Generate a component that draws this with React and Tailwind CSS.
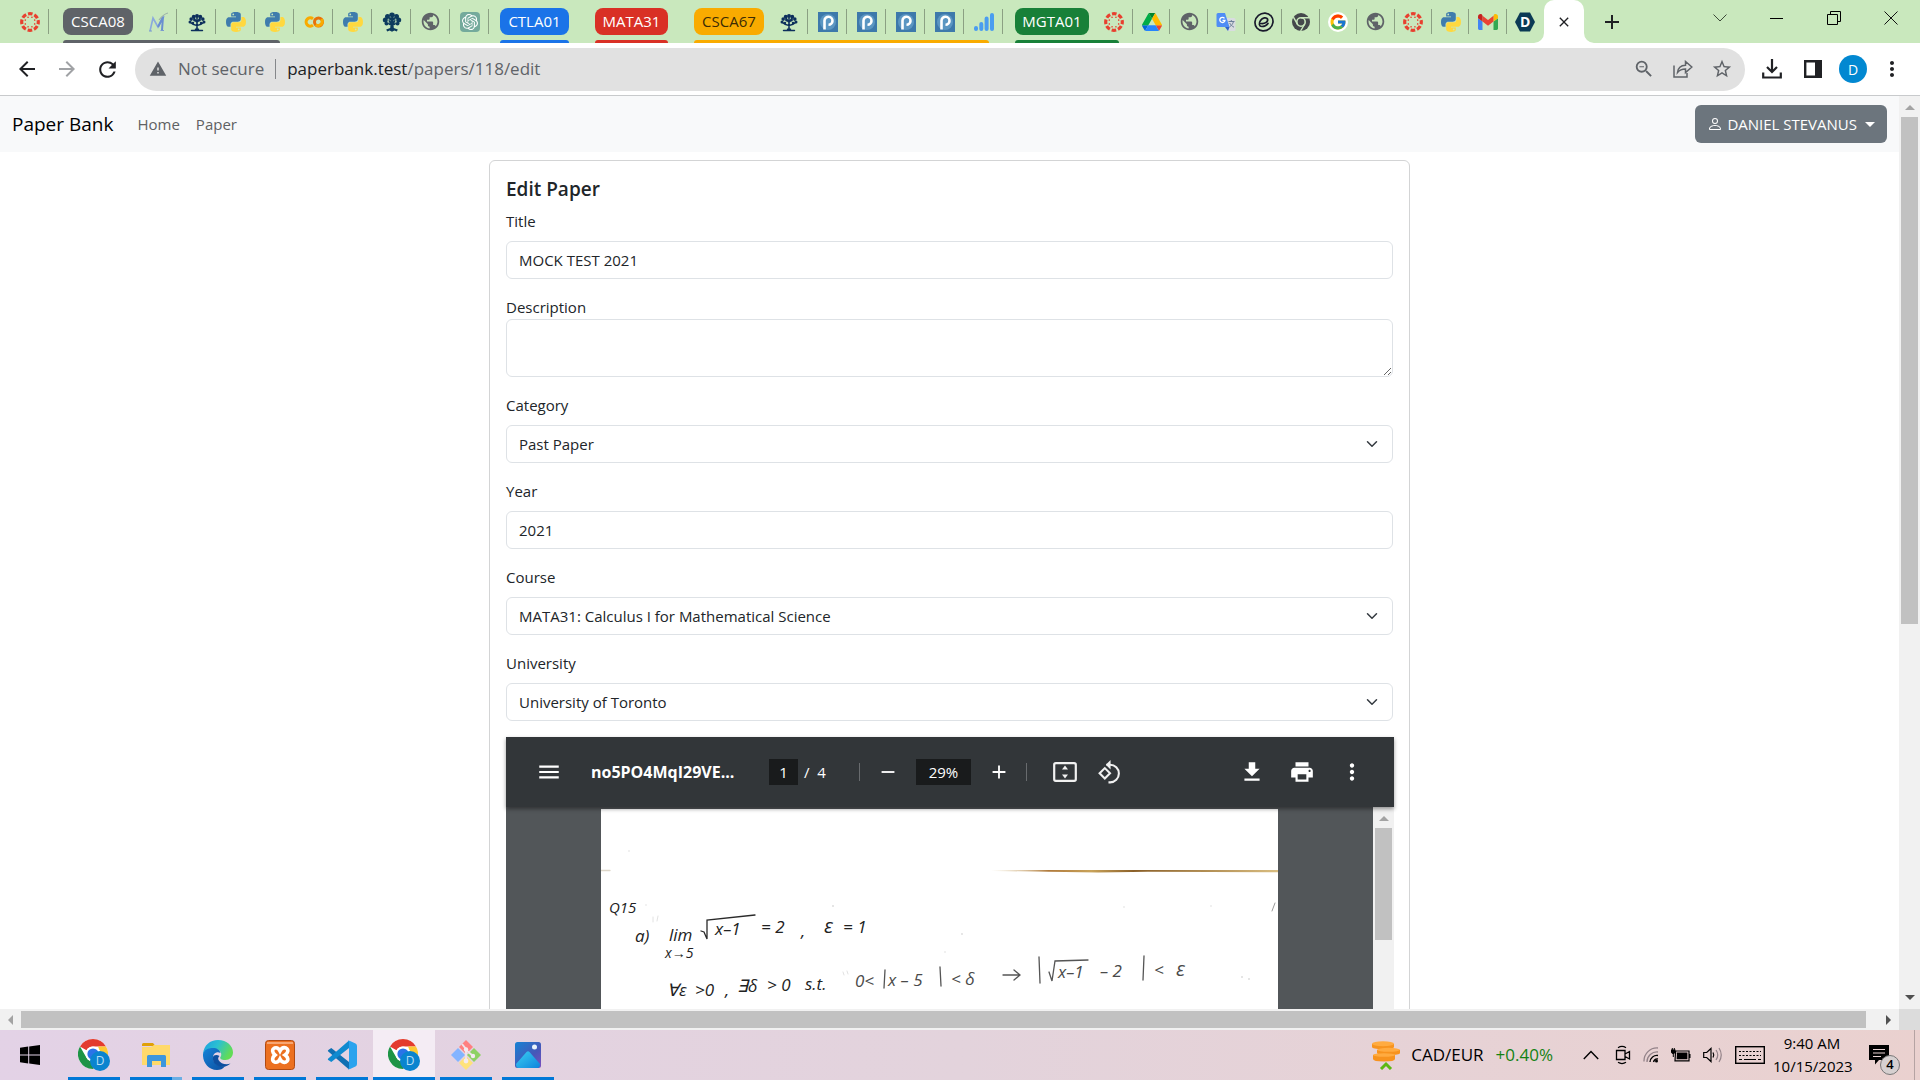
import React from "react";
import {
  MdArrowBack, MdArrowForward, MdRefresh, MdWarning, MdZoomOut, MdStarOutline,
  MdMoreVert, MdMenu, MdRemove, MdAdd, MdPrint, MdDownload, MdPublic, MdClose,
} from "react-icons/md";
import { BsPerson } from "react-icons/bs";
import { FcGoogle } from "react-icons/fc";
import { SiOpenai } from "react-icons/si";

/* ---------- tab icons ---------- */

const Canvas = () => (
  <svg viewBox="0 0 20 20" className="size-5">
    <circle cx="10" cy="10" r="8.3" fill="none" stroke="#e8402f" strokeWidth="3.2" strokeDasharray="4.6 1.92" strokeDashoffset="2.3" />
    {[0, 45, 90, 135, 180, 225, 270, 315].map((a) => (
      <circle key={a} cx="10" cy="4.9" r="0.8" fill="#e8402f" transform={`rotate(${a + 22.5} 10 10)`} />
    ))}
  </svg>
);

const Python = () => (
  <svg viewBox="0 0 256 255" className="size-5">
    <path fill="#3f7cad" d="M126.916.072c-64.832 0-60.784 28.115-60.784 28.115l.072 29.128h61.868v8.745H41.631S.145 61.355.145 126.77c0 65.417 36.21 63.097 36.21 63.097h21.61v-30.356s-1.165-36.21 35.632-36.21h61.362s34.475.557 34.475-33.319V33.97S194.67.072 126.916.072zM92.802 19.66a11.12 11.12 0 0 1 11.13 11.13 11.12 11.12 0 0 1-11.13 11.13 11.12 11.12 0 0 1-11.13-11.13 11.12 11.12 0 0 1 11.13-11.13z" />
    <path fill="#ffd83f" d="M128.757 254.126c64.832 0 60.784-28.115 60.784-28.115l-.072-29.127H127.6v-8.745h86.441s41.486 4.705 41.486-60.712c0-65.416-36.21-63.096-36.21-63.096h-21.61v30.355s1.165 36.21-35.632 36.21h-61.362s-34.475-.557-34.475 33.32v56.013s-5.235 33.897 62.518 33.897zm34.114-19.586a11.12 11.12 0 0 1-11.13-11.13 11.12 11.12 0 0 1 11.13-11.131 11.12 11.12 0 0 1 11.13 11.13 11.12 11.12 0 0 1-11.13 11.13z" />
  </svg>
);

const Tree = () => (
  <svg viewBox="0 0 20 20" className="size-5" fill="none" stroke="#0d2f5c" strokeLinecap="round">
    <path strokeWidth="1.6" d="M10 17V6M10 13.500C7 13 5 12 3.500 10.500M10 13.500c3-.5 5-1.500 6.500-3M10 10C8 9 7 7 6.500 5M10 10c2-1 3-3 3.500-5" />
    <path strokeWidth="1.400" d="M4.500 18.500h11M8.500 17.300h3" />
    <g fill="#0d2f5c" stroke="none">
      <circle cx="10" cy="4" r="2" /><circle cx="6.700" cy="4.700" r="1.900" /><circle cx="13.300" cy="4.700" r="1.900" />
      <circle cx="4.200" cy="7.100" r="1.800" /><circle cx="15.800" cy="7.100" r="1.800" />
      <circle cx="3" cy="9.900" r="1.500" /><circle cx="17" cy="9.900" r="1.500" />
      <circle cx="7.500" cy="8" r="1.400" /><circle cx="12.500" cy="8" r="1.400" /><circle cx="6" cy="11" r="1.200" /><circle cx="14" cy="11" r="1.200" />
    </g>
  </svg>
);

const FullTree = () => (
  <svg viewBox="0 0 20 20" className="size-5" fill="#0d3b5e">
    <circle cx="10" cy="3.300" r="2.800" /><circle cx="5.500" cy="4.500" r="2.500" /><circle cx="14.500" cy="4.500" r="2.500" />
    <circle cx="3.300" cy="8" r="2.500" /><circle cx="16.700" cy="8" r="2.500" /><circle cx="10" cy="8" r="3.500" />
    <circle cx="4.500" cy="11.500" r="2" /><circle cx="15.500" cy="11.500" r="2" />
    <circle cx="8" cy="11.500" r="1.800" /><circle cx="12" cy="11.500" r="1.800" />
    <path d="M8.700 10h2.600l.5 6 4 1.500-1 2-2.500-1-2.300 1.300-2.300-1.300-2.500 1-1-2 4-1.500z" />
    <path stroke="#9fc3ae" strokeWidth=".5" fill="none" d="M6 7l3 2M14 7l-3 2M8 4l1 2M12.500 4l-1 2M5 10l3 1M15 10l-3 1" />
  </svg>
);

const MLogo = () => (
  <svg viewBox="0 0 20 20" className="size-5" fill="none">
    <path d="M2 19L5 6l5 9 6-11" stroke="#8aa9dd" strokeWidth="1.600" />
    <path d="M10 15L15 5l-1 13" stroke="#6a8fd0" strokeWidth="2" />
    <path d="M11 8c3-4 5-6 9-7" stroke="#9bb1a8" strokeWidth="1.200" />
    <path d="M1 19h3M12.500 18.500H16" stroke="#7b9ad0" strokeWidth="1.200" />
  </svg>
);

const Colab = () => (
  <svg viewBox="0 0 20 20" className="size-5" fill="none" strokeWidth="3">
    <path stroke="#f9ab00" d="M9 6.800A4.200 4.200 0 1 0 9 13.200" />
    <circle cx="14.500" cy="10" r="4" stroke="#e8710a" />
    <path stroke="#f9ab00" d="M11.700 12.800a4 4 0 0 0 5.600-5.600" />
  </svg>
);

const Globe = () => <MdPublic className="size-[21px] text-[#5f6368]" />;

const Gpt = () => (
  <span className="flex size-5 items-center justify-center rounded-sm bg-[#74aa9c] text-white">
    <SiOpenai className="size-4" />
  </span>
);

const PLogo = () => (
  <svg viewBox="0 0 20 20" className="size-5">
    <rect width="20" height="20" fill="#3d79ab" />
    <circle cx="10" cy="10" r="8" fill="#5b96c2" />
    <path d="M6.500 17.500V8.500a4 4 0 1 1 4 4.300" fill="none" stroke="#fff" strokeWidth="2.600" />
  </svg>
);

const Bars = () => (
  <svg viewBox="0 0 20 20" className="size-5" stroke="#4a9df0" strokeWidth="4" strokeLinecap="round">
    <path d="M2 17v-1M7.300 17v-5M12.600 17V6.500M18 17V3" />
  </svg>
);

const Drive = () => (
  <svg viewBox="0 0 87.300 78" className="size-5">
    <path fill="#0066da" d="M6.600 66.850l3.850 6.650c.8 1.400 1.950 2.500 3.300 3.300L27.500 53H0c0 1.550.4 3.100 1.200 4.500z" />
    <path fill="#00ac47" d="M43.650 25L29.900 1.200c-1.350.8-2.500 1.900-3.300 3.300L1.200 48.500A9 9 0 0 0 0 53h27.500z" />
    <path fill="#ea4335" d="M73.550 76.800c1.350-.8 2.500-1.900 3.300-3.300l1.600-2.750L86.100 57.500c.8-1.400 1.200-2.950 1.200-4.500H59.800l5.850 11.500z" />
    <path fill="#00832d" d="M43.650 25L57.400 1.200C56.050.4 54.500 0 52.900 0H34.400c-1.600 0-3.150.45-4.500 1.200z" />
    <path fill="#2684fc" d="M59.800 53H27.500L13.750 76.800c1.350.8 2.900 1.200 4.500 1.200h50.800c1.600 0 3.150-.45 4.500-1.200z" />
    <path fill="#ffba00" d="M73.400 26.500L60.700 4.500c-.8-1.400-1.950-2.500-3.300-3.300L43.650 25 59.800 53h27.450c0-1.550-.4-3.100-1.200-4.500z" />
  </svg>
);

const Translate = () => (
  <svg viewBox="0 0 20 20" className="size-5">
    <path fill="#d9dce0" d="M8 6h10a1.500 1.500 0 0 1 1.500 1.500v10A1.500 1.500 0 0 1 18 19h-6z" />
    <path fill="#4f8df5" d="M2 1h7l4.500 14H2A1.500 1.500 0 0 1 .5 13.500v-11A1.500 1.500 0 0 1 2 1z" />
    <path fill="#2f62c9" d="M9 15h4.500L12 19z" />
    <path d="M8.500 6.300A2.600 2.600 0 1 0 9 8.300H6.500" fill="none" stroke="#fff" strokeWidth="1.300" />
    <path d="M12.500 9.500h6M15.300 8v1.500M17.500 9.500c-.7 2.500-2 4-4 5.500M13.700 11c1 2 2.300 3.200 4.300 4.200" fill="none" stroke="#6b7f99" />
  </svg>
);

const Swirl = () => (
  <svg viewBox="0 0 20 20" className="size-5" fill="none" stroke="#191a2c" strokeWidth="1.700" strokeLinecap="round">
    <ellipse cx="10" cy="10" rx="9.300" ry="8.600" transform="rotate(-40 10 10)" />
    <path d="M7 11.500c4 .5 7.500-2 6.500-4.500-1-2-5-1.500-7 1.500s-1.500 6 1.500 6c2.500 0 4.500-1 6-3" />
  </svg>
);

const DarkChrome = () => (
  <svg viewBox="0 0 20 20" className="size-5" fill="none">
    <circle cx="10" cy="10" r="9" fill="#45484c" />
    <circle cx="10" cy="10" r="4.200" stroke="#c9e7bd" strokeWidth="1.600" />
    <path d="M10 5.800h8M6.400 12.100L2.400 5.200M13.600 12.100l-4 6.900" stroke="#c9e7bd" strokeWidth="1.400" />
  </svg>
);

const GoogleDot = () => (
  <span className="flex size-5 items-center justify-center rounded-full bg-white"><FcGoogle className="size-[18px]" /></span>
);

const Gmail = () => (
  <svg viewBox="0 0 20 16" className="h-4 w-5">
    <path fill="#4285f4" d="M1.400 16H4.500V7.500L0 4.200v10.400C0 15.400.6 16 1.400 16z" />
    <path fill="#34a853" d="M15.500 16h3.100c.8 0 1.400-.6 1.400-1.400V4.200l-4.500 3.300z" />
    <path fill="#fbbc04" d="M15.500 1.800v5.700L20 4.200V2.500c0-2-2.300-3.100-3.900-2z" />
    <path fill="#ea4335" d="M4.500 7.500V1.800L10 6l5.500-4.200v5.700L10 11.700z" />
    <path fill="#c5221f" d="M0 2.500v1.700l4.500 3.300V1.800L3.900.5C2.300-.6 0 .5 0 2.500z" />
  </svg>
);

const Hexagon = () => (
  <span className="relative flex h-5 w-5 items-center justify-center">
    <svg viewBox="0 0 20 20" className="absolute inset-0 size-5"><path fill="#0b3a55" d="M5 0.500h10l5 9.500-5 9.500H5L0 10z" /></svg>
    <span className="relative text-sm leading-5 font-bold text-white">D</span>
  </span>
);

/* ---------- taskbar icons ---------- */

const Chrome = () => (
  <span className="relative block size-8">
    <svg viewBox="0 0 48 48" className="size-[30px]">
      <circle cx="24" cy="24" r="24" fill="#fff" />
      <path fill="#e33b2e" d="M24 0a24 24 0 0 1 20.800 12H24a12 12 0 0 0-10.400 6L3.200 12A24 24 0 0 1 24 0z" />
      <path fill="#fcc934" d="M44.800 12A24 24 0 0 1 24 48l10.400-18a12 12 0 0 0 0-12L32 12z" />
      <path fill="#1e9446" d="M3.200 12A24 24 0 0 0 24 48l10.400-18A12 12 0 0 1 13.600 30z" />
      <circle cx="24" cy="24" r="12" fill="#fff" />
      <circle cx="24" cy="24" r="9" fill="#2a73e8" />
    </svg>
    <span className="absolute right-0 bottom-0 flex size-5 items-center justify-center rounded-full bg-[#0a84cf] text-xs text-[#b8def5]">D</span>
  </span>
);

const Folder = () => (
  <svg viewBox="0 0 28 24" className="h-6 w-7">
    <path fill="#e0a008" d="M0 1.500A1.500 1.500 0 0 1 1.500 0H11l2.500 3H0z" />
    <path fill="#ffd96b" d="M0 4h9l3-2h16v20H0z" />
    <path fill="#3c96dd" d="M5 13.500A1.500 1.500 0 0 1 6.500 12h16a1.500 1.500 0 0 1 1.500 1.500V24h-5v-6h-9v6H5z" />
  </svg>
);

const Edge = () => (
  <svg viewBox="0 0 30 30" className="size-[30px]">
    <defs>
      <linearGradient id="edgeTop" x1="0" y1="0" x2="1" y2=".4"><stop offset="0" stopColor="#1b9de2" /><stop offset=".5" stopColor="#2bc0d2" /><stop offset="1" stopColor="#62dc57" /></linearGradient>
      <linearGradient id="edgeLow" x1="0" y1="0" x2="1" y2="1"><stop offset="0" stopColor="#1583d8" /><stop offset="1" stopColor="#0c4fa0" /></linearGradient>
    </defs>
    <path fill="url(#edgeTop)" d="M0 14C1 5 7 0 15 0c9 0 15 6 15 12.500 0 4.500-3.500 7.500-7.500 7.500-4.500 0-6-1.500-5-3 2-3 0-8-6-8C6 9 1 11 0 14z" />
    <path fill="url(#edgeLow)" d="M0 14c1-4 5-6 10-6 4 0 7 2 7.500 5-4-2-8 1-7.500 5.500C10.500 24 16 27 22 26c-2 3-5 4-8 4C5 30-.5 22 0 14z" />
    <path fill="#0d4f9f" d="M10 17c-1 6 4 10 10 9.800 3-.1 5.500-1.300 7.500-3.300-4 1.500-10 .5-12-3.500-.8-1.600 0-3 1-4-3-2-6-1-6.500 1z" />
  </svg>
);

const Xampp = () => (
  <svg viewBox="0 0 30 30" className="size-[30px]">
    <rect x=".5" y=".5" width="29" height="29" rx="3" fill="#ec7020" stroke="#b04a12" />
    <path fill="#f7a673" d="M2 2h26v2H2z" />
    <path d="M9.500 8c3-1 4.500 1 5.500 3 1-2 3-4 6-3 3 1.500 2 5-1 7 3 2 4 5.500 1 7-3 1-5-1-6-3-1 2-2.500 4-5.500 3-3-1.500-2-5 .5-7-2.500-2-3.500-5.500-.5-7z" fill="none" stroke="#fff" strokeWidth="3.600" />
  </svg>
);

const VsCode = () => (
  <svg viewBox="0 0 30 30" className="size-[30px]">
    <path fill="#1070b3" d="M2 9.500L4.300 8 22 22v7.500L1 11.300q-.8-.9 1-1.800z" />
    <path fill="#0f8ad0" d="M2 20.500L4.300 22 22 8V.5L1 18.700q-.8.9 1 1.800z" />
    <path fill="#2aa3ee" d="M21 .5q1 0 2 .4l5.500 2.700Q30 4.400 30 6v18q0 1.600-1.500 2.400L23 29.100q-1 .4-2 .4 1-1 1-2V2.500q0-1-1-2z" />
  </svg>
);

const Git = () => (
  <svg viewBox="0 0 30 30" className="size-[30px]">
    <path fill="#ff8080" d="M15 0l7 7-7 7-7-7z" /><path fill="#83b4ff" d="M7 8l7 7-7 7-7-7z" />
    <path fill="#8ed163" d="M23 8l7 7-7 7-7-7z" /><path fill="#ffe27a" d="M15 16l7 7-7 7-7-7z" />
    <path d="M11 4l4 5v14M15 10l7 6" stroke="#efe3e8" strokeWidth="2" fill="none" />
    <g fill="#f4eaf0"><circle cx="15" cy="9.500" r="2.200" /><circle cx="22" cy="16" r="2.200" /><circle cx="15" cy="21" r="2.400" /></g>
  </svg>
);

const Photos = () => (
  <svg viewBox="0 0 26 26" className="size-[26px]">
    <defs>
      <linearGradient id="sky" x1="0" y1="0" x2="1" y2="1"><stop offset="0" stopColor="#1583d4" /><stop offset=".6" stopColor="#4658b8" /><stop offset="1" stopColor="#7c4fc0" /></linearGradient>
      <linearGradient id="hill" x1="0" y1="0" x2="1" y2="1"><stop offset="0" stopColor="#3ad0f2" /><stop offset="1" stopColor="#0f84dc" /></linearGradient>
    </defs>
    <rect width="26" height="26" rx="2.500" fill="url(#sky)" />
    <path fill="url(#hill)" d="M1 22l10.500-12q1.500-1.700 3 0L25 22q0 4-2.500 4h-19Q1 26 1 22z" />
    <circle cx="19.500" cy="5" r="2.500" fill="#e9f3fb" />
  </svg>
);

const Coins = () => (
  <svg viewBox="0 0 28 29" className="h-[29px] w-7">
    <g fill="#f7931e">
      <path d="M0 3v3q0 2 11 2t11-2V3z" /><path d="M5 9v3q0 2 11.500 2T28 12V9z" /><path d="M1 14v4q0 2.500 11 2.500T23 18v-4z" />
    </g>
    <g fill="#ffab40"><ellipse cx="11" cy="2.800" rx="11" ry="2.500" /><ellipse cx="16.500" cy="8.800" rx="11.500" ry="2" /><ellipse cx="12" cy="14" rx="11" ry="1.800" /></g>
    <path d="M9 28l5-5 5 5" fill="none" stroke="#5cb812" strokeWidth="3" />
  </svg>
);

/* ---------- browser chrome ---------- */

function Tab({ label, children, grow }) {
  return (
    <button
      aria-label={label}
      className={`relative flex h-[43px] items-center justify-center after:absolute after:top-[9px] after:right-0 after:h-[25px] after:w-px after:bg-[#8ba083] ${grow ? "min-w-0 flex-1" : "w-[39px]"}`}
    >
      {children}
    </button>
  );
}

function Group({ name, chip, bar, children, className = "" }) {
  return (
    <div className={`relative flex items-center ${className}`}>
      <button className={`h-[27px] rounded-lg text-center text-[15px] leading-[27px] ${chip}`}>{name}</button>
      {children && <div className="ml-[5px] flex">{children}</div>}
      <div className={`absolute bottom-0 left-0 h-[3px] rounded-t-sm ${bar} ${children ? "right-[14px]" : "right-0"}`} />
    </div>
  );
}

function TabStrip() {
  return (
    <header className="flex h-[43px] shrink-0 bg-[#c9e8bd]">
      <div className="ml-2.5"><Tab label="Canvas"><Canvas /></Tab></div>
      <Group name="CSCA08" chip="bg-[#5f6368] text-white w-[70px]" bar="bg-[#5f6368]" className="ml-3.5">
        <Tab label="Mathematics"><MLogo /></Tab>
        <Tab label="University"><Tree /></Tab>
        <Tab label="Python"><Python /></Tab>
        <Tab label="Python"><Python /></Tab>
      </Group>
      <Tab label="Colab"><Colab /></Tab>
      <Tab label="Python"><Python /></Tab>
      <Tab label="University"><FullTree /></Tab>
      <Tab label="Site"><Globe /></Tab>
      <Tab label="Chat"><Gpt /></Tab>
      <Group name="CTLA01" chip="bg-[#1a73e8] text-white w-[69px]" bar="bg-[#1a73e8]" className="ml-[11px]" />
      <Group name="MATA31" chip="bg-[#d93025] text-white w-[73px]" bar="bg-[#d93025]" className="ml-[26px]" />
      <Group name="CSCA67" chip="bg-[#f9ab00] text-[#3c2c05] w-[70px]" bar="bg-[#f9ab00]" className="ml-[26px]">
        <Tab label="University"><Tree /></Tab>
        <Tab label="Paper"><PLogo /></Tab>
        <Tab label="Paper"><PLogo /></Tab>
        <Tab label="Paper"><PLogo /></Tab>
        <Tab label="Paper"><PLogo /></Tab>
        <Tab label="Chart"><Bars /></Tab>
      </Group>
      <Group name="MGTA01" chip="bg-[#188038] text-white w-[74px]" bar="bg-[#188038]" className="ml-3">
        <Tab label="Canvas"><Canvas /></Tab>
      </Group>
      <div className="flex w-[411px]">
        <Tab grow label="Drive"><Drive /></Tab>
        <Tab grow label="Site"><Globe /></Tab>
        <Tab grow label="Translate"><Translate /></Tab>
        <Tab grow label="Site"><Swirl /></Tab>
        <Tab grow label="Chrome"><DarkChrome /></Tab>
        <Tab grow label="Google"><GoogleDot /></Tab>
        <Tab grow label="Site"><Globe /></Tab>
        <Tab grow label="Canvas"><Canvas /></Tab>
        <Tab grow label="Python"><Python /></Tab>
        <Tab grow label="Gmail"><Gmail /></Tab>
        <button aria-label="D" className="flex h-[43px] min-w-0 flex-1 items-center justify-center"><Hexagon /></button>
      </div>
      <div className="relative flex w-10 items-center justify-center rounded-t-[10px] bg-white">
        <svg viewBox="0 0 10 10" className="absolute bottom-0 -left-2.5 size-2.5"><path fill="#fff" d="M10 0v10H0A10 10 0 0 0 10 0z" /></svg>
        <svg viewBox="0 0 10 10" className="absolute -right-2.5 bottom-0 size-2.5"><path fill="#fff" d="M0 0v10h10A10 10 0 0 1 0 0z" /></svg>
        <button aria-label="Close tab"><MdClose className="size-4 text-[#202124]" /></button>
      </div>
      <button aria-label="New tab" className="ml-4"><MdAdd className="size-6 text-[#202124]" /></button>
      <div className="ml-auto flex h-9 items-center">
        <button aria-label="Search tabs" className="flex w-[57px] justify-center">
          <svg viewBox="0 0 14 8" className="h-2 w-3.5" fill="none" stroke="#3c4a38"><path d="M.5.5L7 7 13.500.5" /></svg>
        </button>
        <button aria-label="Minimize" className="flex w-[57px] justify-center"><span className="h-px w-[13px] bg-black" /></button>
        <button aria-label="Restore" className="flex w-[57px] justify-center">
          <svg viewBox="0 0 14 14" className="size-3.5" fill="none" stroke="#000"><path d="M.5 3.500h10v10H.5zM3.500 3.500V.5h10v10h-3" /></svg>
        </button>
        <button aria-label="Close" className="flex w-[58px] justify-center">
          <svg viewBox="0 0 14 14" className="size-3.5" fill="none" stroke="#111"><path d="M.5.5l13 13M13.500.5l-13 13" /></svg>
        </button>
      </div>
    </header>
  );
}

function AddressBar() {
  return (
    <div className="flex h-[53px] shrink-0 items-center border-b border-[#c8cacc] bg-white pr-4 pl-[15px] text-[#202124]">
      <button aria-label="Back"><MdArrowBack className="size-6" /></button>
      <button aria-label="Forward" className="ml-4"><MdArrowForward className="size-6 text-[#a0a2a5]" /></button>
      <button aria-label="Reload" className="ml-4"><MdRefresh className="size-[25px]" /></button>
      <div className="ml-[15px] flex h-[43px] flex-1 items-center rounded-full bg-[#e1e1e1] pr-3 pl-3.5 text-[17px] text-[#5f6368]">
        <MdWarning className="size-[18px]" />
        <span className="ml-[11px]">Not secure</span>
        <span className="mx-[11px] h-5 w-px bg-[#85878a]" />
        <span><span className="text-[#202124]">paperbank.test</span>/papers/118/edit</span>
        <div className="ml-auto flex items-center gap-[18px]">
          <button aria-label="Zoom"><MdZoomOut className="size-[22px]" /></button>
          <button aria-label="Share">
            <svg viewBox="0 0 20 18" className="h-[18px] w-5" fill="none" stroke="currentColor" strokeWidth="1.500"><path d="M1 5.500V17h13v-4M4.500 12.500C5 8 8 5.500 12.500 5.300V1.500L18.800 7l-6.300 5.500V9C9 9 6.500 10 4.500 12.500z" /></svg>
          </button>
          <button aria-label="Bookmark"><MdStarOutline className="size-[22px]" /></button>
        </div>
      </div>
      <button aria-label="Downloads" className="ml-[17px]">
        <svg viewBox="0 0 20 20" className="size-5" fill="none" stroke="currentColor" strokeWidth="2.200"><path d="M10 0v12.500M5 8l5 5 5-5M1.200 13.500v5h17.600v-5" /></svg>
      </button>
      <button aria-label="Side panel" className="ml-[22px]">
        <svg viewBox="0 0 18 18" className="size-[18px]"><path fill="none" stroke="currentColor" strokeWidth="2.400" d="M1.200 1.200h15.600v15.600H1.200z" /><path fill="currentColor" d="M11 0h7v18h-7z" /></svg>
      </button>
      <button className="ml-[17px] size-7 rounded-full bg-[#0288d1] text-[14px] text-white">D</button>
      <button aria-label="Menu" className="ml-[13px]"><MdMoreVert className="size-6" /></button>
    </div>
  );
}

/* ---------- form ---------- */

const fieldClass = "block h-[38px] w-full appearance-none rounded-md border border-[#dee2e6] bg-white px-3 text-[15px] text-[#212529]";

function TextField({ id, label, value }) {
  return (
    <div className="mb-4">
      <label htmlFor={id} className="mb-2 block">{label}</label>
      <input id={id} defaultValue={value} className={fieldClass} />
    </div>
  );
}

function SelectField({ id, label, value }) {
  return (
    <div className="mb-4">
      <label htmlFor={id} className="mb-2 block">{label}</label>
      <div className="relative">
        <select id={id} className={fieldClass}><option>{value}</option></select>
        <svg viewBox="0 0 16 16" className="pointer-events-none absolute top-[13px] right-[15px] size-3" fill="none" stroke="#343a40" strokeWidth="2" strokeLinecap="round" strokeLinejoin="round"><path d="m2 5 6 6 6-6" /></svg>
      </div>
    </div>
  );
}

function Scan() {
  return (
    <svg viewBox="0 0 677 260" className="h-[260px] w-[677px] bg-white" fill="none" stroke="#2a2a2a" strokeWidth="1.300" strokeLinecap="round">
      <defs>
        <linearGradient id="crease"><stop offset="0" stopColor="#d9c28a" stopOpacity="0" /><stop offset=".2" stopColor="#b07a3c" /><stop offset=".35" stopColor="#c9a35a" /><stop offset=".5" stopColor="#8a5f28" /><stop offset="1" stopColor="#d9bd80" /></linearGradient>
      </defs>
      <path fill="url(#crease)" stroke="none" d="M390 61h287v2.200l-130-.4-50 .8-107-1.600z" />
      <path stroke="#ddd6c8" d="M0 61.500h9" />
      <path stroke="#9a9a9a" d="M674 94l-3 8" strokeWidth="1" />
      <g fill="#dcdcdc" stroke="none">
        <circle cx="28" cy="42" r=".8" /><circle cx="232" cy="97" r="1" /><circle cx="361" cy="125" r=".9" /><circle cx="344" cy="143" r=".8" />
        <circle cx="523" cy="98" r=".8" /><circle cx="610" cy="97" r=".8" /><circle cx="641" cy="168" r="1" /><circle cx="648" cy="170" r="1" /><circle cx="45" cy="96" r=".7" />
      </g>
      <path stroke="#e2e2e2" d="M52 108v5M57 107l-1 5M242 163l1 3M246 162l1 3" strokeWidth="1" />
      <g fill="#222" stroke="none" className="italic" fontSize="17">
        <text x="8" y="104" fontSize="15">Q15</text>
        <text x="34" y="133">a)</text>
        <text x="68" y="132">lim</text>
        <text x="64" y="149" fontSize="14">x→5</text>
        <text x="114" y="126">x–1</text>
        <text x="160" y="124">= 2</text>
        <text x="200" y="128">,</text>
        <text x="223" y="124" fontSize="20">ε</text>
        <text x="242" y="124">= 1</text>
        <text x="66" y="187">∀ε</text>
        <text x="94" y="187">&gt;0</text>
        <text x="124" y="187">,</text>
        <text x="136" y="183">∃δ</text>
        <text x="166" y="182">&gt; 0</text>
        <text x="204" y="181">s.t.</text>
      </g>
      <g fill="#4a4a4a" stroke="none" className="italic" fontSize="17">
        <text x="254" y="178">0&lt;</text>
        <text x="287" y="177">x – 5</text>
        <text x="350" y="176">&lt; δ</text>
        <text x="457" y="169">x–1</text>
        <text x="499" y="168">– 2</text>
        <text x="553" y="167">&lt;</text>
        <text x="575" y="167" fontSize="20">ε</text>
      </g>
      <path d="M100 122l3 1 3 7 0-19 48-5" />
      <path stroke="#555" d="M284 161l-1 18M339 158l1 19M402 166h17M413 161l6 5-6 5M438 148l1 26M448 163l3 9 3-20 33-1M543 147l-1 24" />
    </svg>
  );
}

function PdfViewer() {
  return (
    <section className="-mr-px bg-[#525659] text-white">
      <div className="relative flex h-[70px] items-center bg-[#323639] pr-[29px] pl-[30px] shadow-[0_2px_4px_rgba(0,0,0,0.4)]">
        <button aria-label="Sidebar"><MdMenu className="size-[26px]" /></button>
        <span className="ml-[29px] w-[178px] text-base font-bold">no5PO4MqI29VE...</span>
        <input aria-label="Page number" defaultValue="1" className="h-[26px] w-[29px] bg-[#191b1c] text-center text-[15px]" />
        <span className="ml-1.5 w-6 text-[15px] whitespace-nowrap">/&nbsp; 4</span>
        <span className="ml-[31px] h-[18px] w-px bg-[#686b6e]" />
        <button aria-label="Zoom out" className="ml-[17px]"><MdRemove className="size-[22px]" /></button>
        <input aria-label="Zoom level" defaultValue="29%" className="ml-[17px] h-[26px] w-[55px] bg-[#191b1c] text-center text-[15px]" />
        <button aria-label="Zoom in" className="ml-[17px]"><MdAdd className="size-[22px]" /></button>
        <span className="ml-4 h-[18px] w-px bg-[#686b6e]" />
        <button aria-label="Fit to page" className="ml-[26px]">
          <svg viewBox="0 0 24 20" className="h-5 w-6"><rect x="1.200" y="1.200" width="21.600" height="17.600" rx="1.500" fill="none" stroke="#f1f1f1" strokeWidth="2.200" /><path fill="#f1f1f1" d="M12 3.500l3 4H9zM12 16.500l3-4H9z" /></svg>
        </button>
        <button aria-label="Rotate" className="ml-5">
          <svg viewBox="0 0 24 24" className="size-[25px]" fill="none" stroke="#f1f1f1" strokeWidth="2"><path d="M7.500 7.800l5 5-5 5-5-5zM9 4.500h3.500a8.500 8.500 0 0 1 0 17H11" /><path fill="#f1f1f1" stroke="none" d="M13 0v9L8.500 4.500z" /></svg>
        </button>
        <div className="ml-auto flex items-center gap-6">
          <button aria-label="Download"><MdDownload className="size-[26px]" /></button>
          <button aria-label="Print"><MdPrint className="size-[26px]" /></button>
          <button aria-label="More"><MdMoreVert className="size-[26px]" /></button>
        </div>
      </div>
      <div className="flex">
        <div className="flex flex-1 justify-center pt-0.5"><Scan /></div>
        <div className="flex w-[21px] flex-col items-center bg-[#f1f1f1]">
          <span className="mt-[9px] border-x-[5px] border-b-[5px] border-x-transparent border-b-[#a3a3a3]" />
          <span className="mt-[7px] h-28 w-[17px] bg-[#c1c1c1]" />
        </div>
      </div>
    </section>
  );
}

function Page() {
  return (
    <div className="flex min-h-0 flex-1">
      <div className="min-w-0 flex-1 overflow-hidden bg-white text-[15px] leading-6 text-[#212529]">
        <nav className="flex h-14 items-center bg-[#f8f9fa] px-3">
          <a href="#" className="mr-6 text-[19px] text-black">Paper Bank</a>
          <a href="#" className="mr-4 text-[#5f6163]">Home</a>
          <a href="#" className="text-[#5f6163]">Paper</a>
          <button className="ml-auto flex h-[38px] items-center rounded-md bg-[#6c757d] px-3 text-white">
            <BsPerson className="mr-1 size-4" />
            DANIEL STEVANUS
            <span className="ml-2 border-x-[5px] border-t-[5px] border-x-transparent border-t-white" />
          </button>
        </nav>
        <form className="mx-auto mt-2 max-w-[921px] rounded-md border border-[#d3d4d5] p-4">
          <h5 className="mb-2 text-[19px] font-semibold">Edit Paper</h5>
          <TextField id="title" label="Title" value="MOCK TEST 2021" />
          <div className="mb-4">
            <label htmlFor="description" className="block">Description</label>
            <textarea id="description" className="block h-[58px] w-full rounded-md border border-[#dee2e6] px-3 py-1.5" />
          </div>
          <SelectField id="category" label="Category" value="Past Paper" />
          <TextField id="year" label="Year" value="2021" />
          <SelectField id="course" label="Course" value="MATA31: Calculus I for Mathematical Science" />
          <SelectField id="university" label="University" value="University of Toronto" />
          <PdfViewer />
        </form>
      </div>
      <div className="flex w-[21px] flex-col items-center bg-[#f1f1f1]">
        <span className="mt-[9px] border-x-[5px] border-b-[5px] border-x-transparent border-b-[#a3a3a3]" />
        <span className="mt-[7px] h-[507px] w-[17px] bg-[#c1c1c1]" />
        <span className="mt-auto mb-[9px] border-x-[5px] border-t-[5px] border-x-transparent border-t-[#505050]" />
      </div>
    </div>
  );
}

function BottomScroll() {
  return (
    <div className="flex h-[21px] shrink-0 items-center bg-[#f1f1f1]">
      <span className="ml-2 border-y-[5px] border-r-[5px] border-y-transparent border-r-[#a3a3a3]" />
      <span className="ml-2 h-[17px] flex-1 bg-[#c1c1c1]" />
      <span className="mr-2 ml-5 border-y-[5px] border-l-[5px] border-y-transparent border-l-[#505050]" />
      <span className="size-[21px] bg-[#dcdcdc]" />
    </div>
  );
}

/* ---------- taskbar ---------- */

const apps = [
  { name: "Chrome", Icon: Chrome },
  { name: "Files", Icon: Folder, stacked: true },
  { name: "Edge", Icon: Edge },
  { name: "XAMPP", Icon: Xampp },
  { name: "Code", Icon: VsCode },
  { name: "Chrome window", Icon: Chrome, active: true },
  { name: "Git", Icon: Git },
  { name: "Photos", Icon: Photos },
];

function Taskbar() {
  return (
    <footer className="flex h-[50px] shrink-0 items-center bg-linear-to-r from-[#e3d2e6] via-[#e3d3dc] to-[#ead1cf] text-black">
      <button aria-label="Start" className="mr-[3px] flex w-[60px] justify-center">
        <svg viewBox="0 0 20 20" className="size-5"><path d="M0 2.700l8.200-1.100v7.900H0zM9.200 1.400L20 0v9.500H9.200zM0 10.500h8.200v7.900L0 17.300zM9.200 10.500H20V20L9.200 18.600z" /></svg>
      </button>
      {apps.map(({ name, Icon, active, stacked }) => (
        <button key={name} aria-label={name} className={`relative flex h-full w-[62px] items-center justify-center ${active ? "bg-[#f4ecf4]" : ""}`}>
          <Icon />
          <span className={`absolute bottom-0 flex h-[3px] bg-[#0078d7] ${active ? "inset-x-0" : "inset-x-[5px]"}`}>
            {stacked && <span className="ml-auto w-2.5 bg-[#6aaee4]" />}
          </span>
        </button>
      ))}
      <button className="ml-auto flex items-center text-[17px]">
        <Coins />
        <span className="ml-[11px]">CAD/EUR</span>
        <span className="ml-3 text-[#138213]">+0.40%</span>
      </button>
      <div className="ml-[30px] flex items-center gap-3">
        <svg viewBox="0 0 16 10" className="h-2.5 w-4" fill="none" stroke="#000" strokeWidth="1.400"><path d="M.8 9L8 1.500 15.200 9" /></svg>
        <svg viewBox="0 0 16 20" className="ml-1 h-5 w-4" fill="none" stroke="#000" strokeWidth="1.300"><path d="M1.500 5.500h8.500v9H1.500zM10 9l4.500-2.500v7.500L10 11.500M3 2.700q4-2.500 8 0M3 17.300q4 2.500 8 0" /></svg>
        <svg viewBox="0 0 16 16" className="size-4" fill="none" strokeWidth="1.300"><path stroke="#938389" d="M1 14.500A13 13 0 0 1 15 1M4 15A10 10 0 0 1 15 5" /><path stroke="#000" d="M7 15a7 7 0 0 1 8-6.500M10.500 15a4 4 0 0 1 4.500-3" /><circle cx="13.500" cy="14" r="1.500" fill="#000" /></svg>
        <svg viewBox="0 0 20 14" className="h-3.5 w-5"><path fill="none" stroke="#000" strokeWidth="1.200" d="M4.600 3h13.400v9.900H4zV6M18.900 6v4" /><path d="M6 4.600h10.400v6.700H5.600zM0 1.500h4.500V4.500L3 6H1.500L0 4.500zM.8 0h1v2h-1zM2.800 0h1v2h-1zM1.800 6h1v3h-1z" /></svg>
        <svg viewBox="0 0 20 16" className="h-4 w-5" fill="none" stroke="#000" strokeWidth="1.200"><path d="M.7 5.500h3L8 1.500v13l-4.300-4h-3zM10 5.500q1.500 2.500 0 5" /><path stroke="#938389" d="M13 3q3.500 5 0 10M16 1q4.500 7 0 14" /></svg>
        <svg viewBox="0 0 30 18" className="h-[18px] w-[30px]" fill="none" stroke="#000"><rect x=".7" y=".7" width="28.600" height="16.600" strokeWidth="1.400" /><path strokeDasharray="2 1.500" d="M4 5.500h22M4 9.500h22" /><path d="M4 13.500h3M9 13.500h12M23 13.500h3" /></svg>
      </div>
      <div className="ml-2 w-[78px] text-center text-[15px] leading-[23px]">
        <div>9:40 AM</div>
        <div>10/15/2023</div>
      </div>
      <button className="relative mr-[25px] ml-[18px]" aria-label="Notifications">
        <svg viewBox="0 0 20 20" className="size-5"><path d="M0 0h20v15H10l-4 4.500V15H0z" /><path stroke="#e8d2d2" strokeWidth="1.200" d="M4 4.500h12M4 8h12M4 11.500h8" /></svg>
        <span className="absolute -right-[11px] -bottom-2.5 flex size-5 items-center justify-center rounded-full border border-[#777] bg-[#d6d0d0] text-[13px] font-semibold">4</span>
      </button>
      <span className="mr-[5px] h-full w-px bg-[#b5a3a3]" />
    </footer>
  );
}

export default function App() {
  return (
    <div className="flex h-screen flex-col overflow-hidden font-['Open_Sans','Noto_Sans',sans-serif]">
      <TabStrip />
      <AddressBar />
      <Page />
      <BottomScroll />
      <Taskbar />
    </div>
  );
}
